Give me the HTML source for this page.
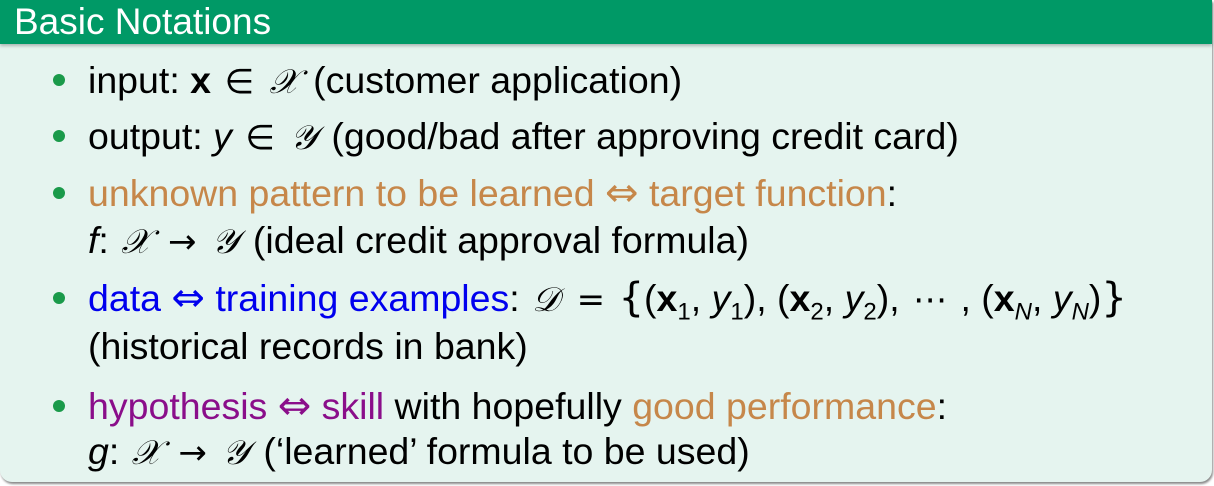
<!DOCTYPE html>
<html><head><meta charset="utf-8"><style>
body{margin:0;width:1214px;height:486px;background:#fff;overflow:hidden;font-family:"Liberation Sans",sans-serif;}
.box{position:absolute;left:0;top:0;width:1212px;height:482px;background:#e5f4ef;border-radius:0 0 12px 12px;box-shadow:1px 2px 2px #888;}
.hd{position:absolute;left:0;top:0;width:1212px;height:44px;background:#009966;color:#fff;font-size:37px;line-height:44px;padding-left:14px;box-sizing:border-box;box-shadow:0 2px 3px rgba(0,0,0,.25);}
.l{position:absolute;left:88px;font-size:37.5px;white-space:nowrap;color:#000;line-height:40px;}
.b{position:absolute;left:53px;width:12px;height:12px;border-radius:50%;background:#1a9a4a;}
.o{color:#c6874a}.bl{color:#0000ee}.p{color:#8a0e8a}
.c{font-family:"DejaVu Serif",serif;font-style:italic;font-size:34px;margin:0 4px 0 2px}
.s{font-family:"DejaVu Sans",sans-serif;font-size:34px;margin:0 3px}
.a{font-family:"DejaVu Sans",sans-serif;font-size:40px}
.br{font-family:"DejaVu Sans",sans-serif;font-size:40px}
sub{font-size:24px}
</style></head><body>
<div class="box"></div>
<div class="hd">Basic Notations</div>
<div class="b" style="top:74px"></div><div class="l" style="top:60px">input: <b>x</b> <span class="s">∈</span> <span class="c">𝒳</span> (customer application)</div>
<div class="b" style="top:130px"></div><div class="l" style="top:116px">output: <i>y</i> <span class="s">∈</span> <span class="c">𝒴</span> (good/bad after approving credit card)</div>
<div class="b" style="top:187px"></div><div class="l" style="top:173px"><span class="o">unknown pattern to be learned <span class="a">⇔</span> target function</span>:</div>
<div class="l" style="top:220px"><i>f</i>: <span class="c">𝒳</span> <span class="s">→</span> <span class="c">𝒴</span> (ideal credit approval formula)</div>
<div class="b" style="top:292px"></div><div class="l" style="top:278px"><span class="bl">data <span class="a">⇔</span> training examples</span>: <span class="c">𝒟</span> <span class="s">=</span> <span class="br">{</span>(<b>x</b><sub>1</sub>, <i>y</i><sub>1</sub>), (<b>x</b><sub>2</sub>, <i>y</i><sub>2</sub>), <span class="s">⋯</span>&nbsp;, (<b>x</b><sub><i>N</i></sub>, <i>y</i><sub><i>N</i></sub>)<span class="br">}</span></div>
<div class="l" style="top:326px">(historical records in bank)</div>
<div class="b" style="top:400px"></div><div class="l" style="top:386px"><span class="p">hypothesis <span class="a">⇔</span> skill</span> with hopefully <span class="o">good performance</span>:</div>
<div class="l" style="top:431px"><i>g</i>: <span class="c">𝒳</span> <span class="s">→</span> <span class="c">𝒴</span> (‘learned’ formula to be used)</div>
</body></html>
